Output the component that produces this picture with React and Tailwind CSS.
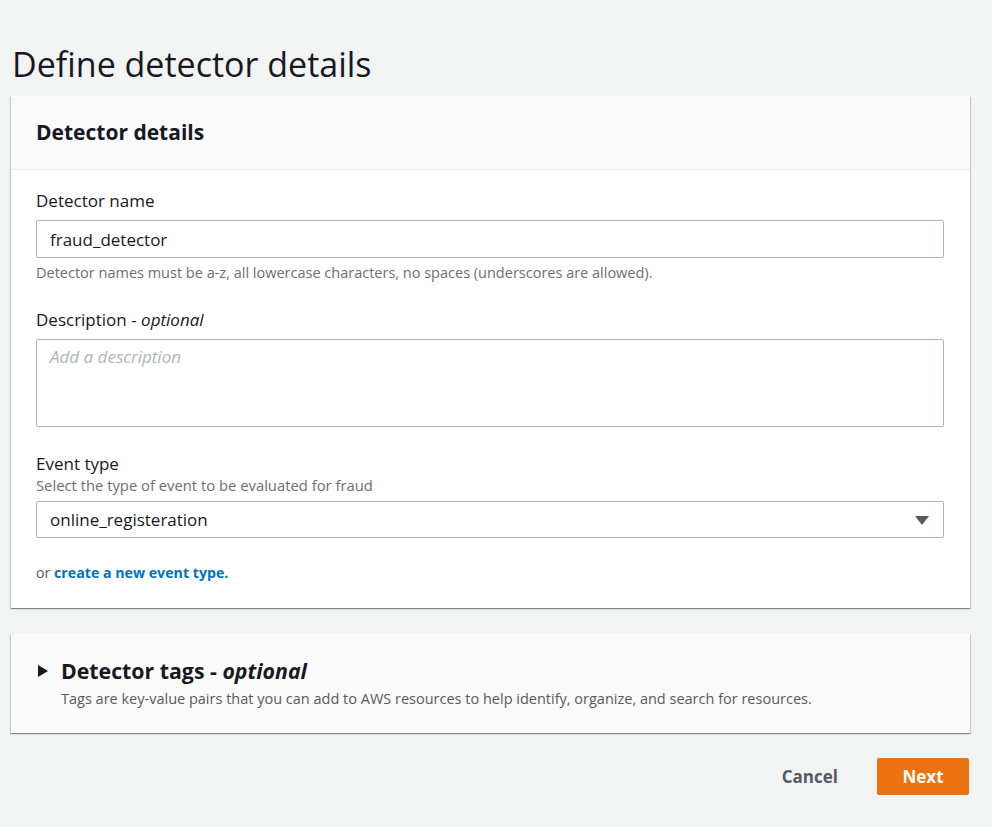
import React, { useState } from 'react';

const font = { fontFamily: '"Open Sans", "Noto Sans", Arial, sans-serif' };

const Label = ({ children }) => (
    <div className="text-[17px] leading-[20px] text-[#16191f]">{children}</div>
);

export default function App() {
    const [name, setName] = useState('fraud_detector');
    const [desc, setDesc] = useState('');

    return (
        <div className="min-h-[827px] bg-[#f2f3f3] px-[11px] pt-[44px] pb-8" style={font}>
            <h1 className="pl-[1px] text-[34px] leading-[40px] font-normal text-[#16191f] mb-[12px]">Define detector details</h1>

            {/* Detector details */}
            <div className="w-[959px] bg-white shadow-[0_1px_1px_0_rgba(0,28,36,0.3),1px_1px_1px_0_rgba(0,28,36,0.15),-1px_1px_1px_0_rgba(0,28,36,0.15)]">
                <div className="h-[74px] bg-[#fafafa] border-b border-[#eaeded] px-[25px] flex items-center">
                    <h2 className="text-[21px] font-bold text-[#16191f] leading-[24px] pb-[1px]">Detector details</h2>
                </div>
                <div className="px-[25px] pt-[21px] pb-[25px]">
                    <Label>Detector name</Label>
                    <input
                        value={name}
                        onChange={(e) => setName(e.target.value)}
                        className="mt-[9px] w-[908px] h-[38px] border border-[#aab7b8] rounded-[2px] px-[13px] text-[17px] text-[#16191f] outline-none"
                        style={font}
                    />
                    <div className="mt-[6px] text-[14.5px] leading-[18px] text-[#687078]">
                        Detector names must be a-z, all lowercase characters, no spaces (underscores are allowed).
                    </div>

                    <div className="mt-[28px]">
                        <Label>Description - <i>optional</i></Label>
                    </div>
                    <textarea
                        value={desc}
                        onChange={(e) => setDesc(e.target.value)}
                        placeholder="Add a description"
                        className="block mt-[9px] w-[908px] h-[88px] border border-[#aab7b8] rounded-[2px] px-[13px] py-[4px] text-[17px] text-[#16191f] outline-none resize-none placeholder:italic placeholder:text-[#aab7b8]"
                        style={font}
                    />

                    <div className="mt-[27px]">
                        <Label>Event type</Label>
                    </div>
                    <div className="mt-[2px] text-[14.8px] leading-[18px] text-[#687078]">Select the type of event to be evaluated for fraud</div>
                    <div className="mt-[7px] w-[908px] h-[37px] border border-[#aab7b8] rounded-[2px] px-[13px] flex items-center justify-between">
                        <span className="text-[17px] text-[#16191f]">online_registeration</span>
                        <svg width="14" height="10" viewBox="0 0 14 10" className="mr-[1px]">
                            <polygon points="0,1 14,1 7,10" fill="#545b64" />
                        </svg>
                    </div>

                    <div className="mt-[25px] text-[14.2px] leading-[20px] text-[#545b64]">
                        or <a href="#" className="font-bold text-[#0073bb]">create a new event type.</a>
                    </div>
                </div>
            </div>

            {/* Detector tags */}
            <div className="mt-[26px] w-[959px] h-[99px] bg-[#fafafa] px-[27px] pt-[24px] shadow-[0_1px_1px_0_rgba(0,28,36,0.3),1px_1px_1px_0_rgba(0,28,36,0.15),-1px_1px_1px_0_rgba(0,28,36,0.15)]">
                <div className="flex items-center gap-[13px]">
                    <svg width="10" height="12" viewBox="0 0 10 12">
                        <polygon points="0,0 10,6 0,12" fill="#16191f" />
                    </svg>
                    <h2 className="text-[21.3px] font-bold text-[#16191f] leading-[26px]">
                        Detector tags - <i>optional</i>
                    </h2>
                </div>
                <div className="ml-[23px] mt-[6px] text-[14.5px] leading-[18px] text-[#545b64]">
                    Tags are key-value pairs that you can add to AWS resources to help identify, organize, and search for resources.
                </div>
            </div>

            {/* Actions */}
            <div className="w-[958px] mt-[25px] flex justify-end items-center gap-[22px]">
                <button className="px-[17px] h-[37px] text-[17px] font-bold text-[#545b64]" style={font}>Cancel</button>
                <button className="w-[92px] h-[37px] rounded-[2px] bg-[#ec7211] text-white text-[17px] font-bold" style={font}>Next</button>
            </div>
        </div>
    );
}
